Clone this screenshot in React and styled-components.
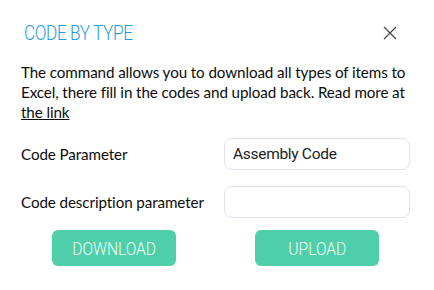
import React from "react";
import { useState } from "react";
import styled, { createGlobalStyle } from "styled-components";

const GlobalStyle = createGlobalStyle`
  body {
    margin: 0;
    background: #fff;
    font-family: "Lato", "Noto Sans", sans-serif;
  }
`;

const App = () => {
  const [code, setCode] = useState("Assembly Code");
  const [description, setDescription] = useState("");
  return (
    <Dialog>
      <GlobalStyle />
      <Header>
        <Title>CODE BY TYPE</Title>
        <CloseButton aria-label="close">
          <svg width="14" height="14" viewBox="0 0 14 14">
            <path
              d="M1 1L13 13M13 1L1 13"
              stroke="#3c4856"
              strokeWidth="1.2"
              fill="none"
            />
          </svg>
        </CloseButton>
      </Header>
      <Text>
        The command allows you to download all types of items to Excel, there
        fill in the codes and upload back. Read more at <a href="#">the link</a>
      </Text>
      <Form>
        <Label>Code Parameter</Label>
        <Input value={code} onChange={(e) => setCode(e.target.value)} />
        <Label>Code description parameter</Label>
        <Input
          value={description}
          onChange={(e) => setDescription(e.target.value)}
        />
      </Form>
      <Buttons>
        <Button>
          <span>DOWNLOAD</span>
        </Button>
        <Button>
          <span>UPLOAD</span>
        </Button>
      </Buttons>
    </Dialog>
  );
};

export default App;

const Dialog = styled.div`
  width: 434px;
  height: 290px;
  box-sizing: border-box;
  padding: 20px 24px 0 21px;
`;

const Header = styled.div`
  display: flex;
  justify-content: space-between;
  align-items: center;
  padding-left: 3px;
  height: 26px;
`;

const Title = styled.h1`
  margin: 0;
  font-family: "Roboto", sans-serif;
  font-weight: 300;
  font-size: 21px;
  letter-spacing: -0.5px;
  color: #1e9be0;
  transform: scaleX(0.82);
  transform-origin: left center;
`;

const CloseButton = styled.button`
  border: none;
  background: none;
  padding: 0;
  margin-right: 13px;
  display: flex;
  cursor: pointer;
`;

const Text = styled.p`
  margin: 16px 0 0;
  font-size: 15.2px;
  letter-spacing: -0.1px;
  line-height: 20px;
  color: #0c0c0c;
  a {
    color: #0c0c0c;
    text-decoration: underline;
  }
`;

const Form = styled.div`
  display: grid;
  grid-template-columns: 203px 186px;
  row-gap: 16px;
  align-items: center;
  margin-top: 16px;
`;

const Label = styled.label`
  font-size: 15.2px;
  letter-spacing: -0.1px;
  color: #0c0c0c;
`;

const Input = styled.input`
  box-sizing: border-box;
  width: 186px;
  height: 32px;
  border: 1px solid #e1e1ee;
  border-radius: 8px;
  padding: 0 8px;
  font-family: "Roboto", sans-serif;
  font-size: 15.5px;
  letter-spacing: -0.3px;
  color: #222;
  outline: none;
`;

const Buttons = styled.div`
  display: flex;
  justify-content: space-between;
  padding: 0 31px;
  margin-top: 12px;
`;

const Button = styled.button`
  width: 124px;
  height: 36px;
  border: none;
  border-radius: 6px;
  background: #4fcfa9;
  color: #f0fff8;
  font-family: "Roboto", sans-serif;
  font-weight: 300;
  font-size: 19px;
  cursor: pointer;
  span {
    display: inline-block;
    transform: scaleX(0.82);
  }
`;
